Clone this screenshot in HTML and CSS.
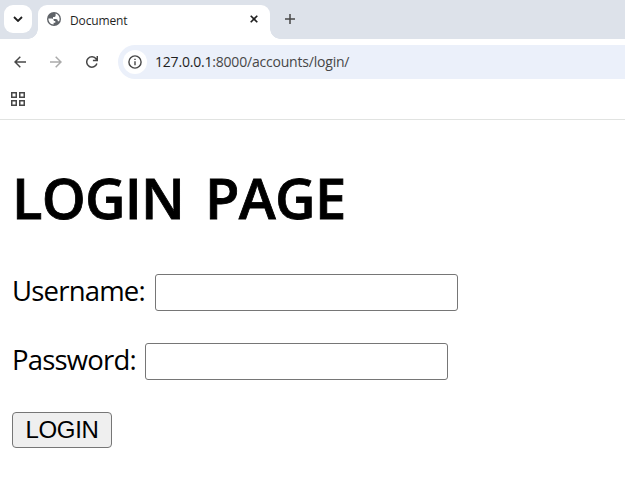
FILE: index.html
```html
<!DOCTYPE html>
<html lang="en">
<head>
<meta charset="utf-8">
<title>Document</title>
<link rel="stylesheet" href="styles.css">
</head>
<body>
<header class="browser">
  <div class="tabstrip">
    <button class="tab-search" aria-label="Search tabs">
      <svg width="10" height="6" viewBox="0 0 10 6"><path d="M1 1l4 4 4-4" fill="none" stroke="#1f1f1f" stroke-width="1.8"/></svg>
    </button>
    <div class="tab">
      <svg class="globe" width="14" height="14" viewBox="0 0 14 14"><circle cx="7" cy="7" r="7" fill="#5f6368"/><path d="M1.400 6.400h3.300c1.300 0 2.100.8 2.100 2v.6h1.500v1.700H6.600v1.700C3.400 12.300 1.400 9.800 1.400 6.400zM8.600 1.600C11 2.300 12.600 4.300 12.600 7c0 .8-.2 1.600-.5 2.200h-1.300c0-1.400-.7-2.100-2-2.100H6V4.900h1.400c.8 0 1.200-.5 1.200-1.300z" fill="#fff"/></svg>
      <span class="tab-title">Document</span>
      <svg class="close" width="8" height="8" viewBox="0 0 8 8"><path d="M.7.7l6.600 6.600M7.300.7L.7 7.300" stroke="#1f1f1f" stroke-width="1.600"/></svg>
    </div>
    <svg class="plus" width="10" height="10" viewBox="0 0 10 10"><path d="M5 0v10M0 5h10" stroke="#474747" stroke-width="1.500"/></svg>
  </div>
  <div class="toolbar">
    <svg class="nav" width="12" height="12" viewBox="0 0 12 12"><path d="M12 6H1M6.300.7L1 6l5.300 5.300" fill="none" stroke="#474747" stroke-width="1.500"/></svg>
    <svg class="nav" width="12" height="12" viewBox="0 0 12 12"><path d="M0 6h11M5.700.7L11 6l-5.300 5.300" fill="none" stroke="#aaa" stroke-width="1.500"/></svg>
    <svg class="nav" width="12" height="12" viewBox="0 0 12 12"><path d="M10.900 7.500A5.200 5.200 0 1 1 10.200 3L11 4.200M11.300 0v4.600H6.900" fill="none" stroke="#474747" stroke-width="1.500"/></svg>
    <div class="omnibox">
      <span class="info"><svg width="14" height="14" viewBox="0 0 14 14"><circle cx="7" cy="7" r="6.100" fill="none" stroke="#474747" stroke-width="1.400"/><path d="M7 6.200v4M7 3.700v1.400" stroke="#474747" stroke-width="1.400"/></svg></span>
      <span class="url"><b>127.0.0.1</b>:8000/accounts/login/</span>
    </div>
  </div>
  <div class="bookmarks">
    <svg width="14" height="14" viewBox="0 0 14 14"><path d="M.75.75h4.500v4.500H.75zM8.750.75h4.500v4.500h-4.500zM.75 8.750h4.500v4.500H.75zM8.750 8.750h4.500v4.500h-4.500z" fill="none" stroke="#474747" stroke-width="1.500"/></svg>
  </div>
</header>
<main>
  <h1><span class="word">LOGIN</span> PAGE</h1>
  <form>
    <div class="row"><label class="user" for="username">Username:</label><input id="username" type="text"></div>
    <div class="row"><label class="pass" for="password">Password:</label><input id="password" type="password"></div>
    <button class="submit" type="button">LOGIN</button>
  </form>
</main>
</body>
</html>
```
FILE: styles.css
```css
* { box-sizing: border-box; }
body {
  margin: 0;
  background: #fff;
  color: #000;
  font-family: "Open Sans", sans-serif;
  overflow: hidden;
}
svg { display: block; flex: none; }
.browser { height: 120px; border-bottom: 1px solid #e1e3e1; }
.tabstrip {
  display: flex;
  height: 39px;
  padding: 5px 0 0 4px;
  background: #dde2ea;
}
.tab-search {
  display: flex;
  align-items: center;
  justify-content: center;
  width: 28px;
  height: 28px;
  padding: 0;
  border: 0;
  border-radius: 9px;
  background: #fff;
}
.tab {
  position: relative;
  display: flex;
  align-items: center;
  width: 232px;
  height: 34px;
  margin-left: 6px;
  padding: 0 12px 6px 9px;
  border-radius: 9px 9px 0 0;
  background: #fff;
}
.tab::before, .tab::after {
  content: "";
  position: absolute;
  bottom: 0;
  width: 10px;
  height: 10px;
}
.tab::before { left: -10px; background: radial-gradient(circle at 0 0, transparent 9.500px, #fff 10px); }
.tab::after { right: -10px; background: radial-gradient(circle at 100% 0, transparent 9.500px, #fff 10px); }
.tab-title { margin-left: 9px; font-size: 12px; line-height: 18px; color: #1f1f1f; letter-spacing: -0.15px; padding-top: 3px; }
.close { margin-left: auto; }
.plus { margin: 9px 0 0 15px; }
.toolbar { display: flex; align-items: center; height: 46px; padding-left: 14px; }
.nav { margin-right: 24px; }
.omnibox {
  display: flex;
  align-items: center;
  flex: 1;
  height: 34px;
  margin-left: -4px;
  padding-left: 5px;
  border-radius: 17px 0 0 17px;
  background: #ebf0fa;
}
.info {
  display: flex;
  align-items: center;
  justify-content: center;
  width: 24px;
  height: 24px;
  border-radius: 50%;
  background: #fff;
}
.url { margin-left: 8px; font-size: 14px; line-height: 20px; color: #474747; letter-spacing: -0.2px; }
.url b { font-weight: 400; color: #1f1f1f; }
.bookmarks { padding: 7px 0 0 11px; }
main { padding: 39px 12px 0; }
h1 { display: flex; gap: 25px; margin: 0; font-size: 56px; line-height: 76px; font-weight: 600; letter-spacing: -0.7px; white-space: nowrap; -webkit-text-stroke: 0.8px #000; }
.word { width: 168px; letter-spacing: -0.8px; }
form { padding-top: 39px; }
.row { display: flex; height: 37px; margin-bottom: 32px; }
label { font-size: 27.5px; line-height: 33px; letter-spacing: -0.8px; white-space: nowrap; }
.user { width: 143px; }
.pass { width: 133px; }
input { width: 303px; height: 37px; padding: 2px 6px; border: 1px solid #767676; border-radius: 3px; background: #fff; outline: 0; }
.submit {
  display: block;
  width: 100px;
  height: 36px;
  padding: 0;
  border: 1px solid #767676;
  border-radius: 4px;
  background: #efefef;
  color: #000;
  font: 24px/34px "Liberation Sans", sans-serif;
  letter-spacing: -0.3px;
}
```
